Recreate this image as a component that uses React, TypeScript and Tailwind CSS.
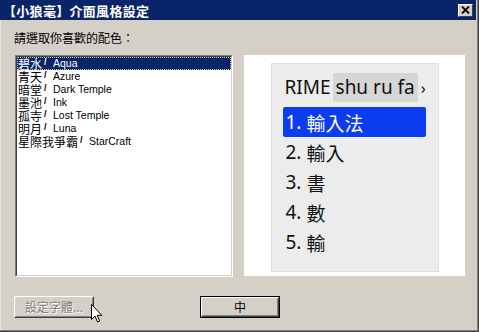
import React from "react";

const items: [string, string][] = [
  ["碧水", "Aqua"],
  ["青天", "Azure"],
  ["暗堂", "Dark Temple"],
  ["墨池", "Ink"],
  ["孤寺", "Lost Temple"],
  ["明月", "Luna"],
  ["星際我爭霸", "StarCraft"],
];

const cands = ["輸入法", "輸入", "書", "數", "輸"];

export default function App() {
  return (
    <div className="relative w-[479px] h-[332px] overflow-hidden bg-[#d4d0c8] font-['Noto_Sans_CJK_TC',sans-serif] shadow-[inset_-1px_-1px_0_#404040,inset_-2px_-2px_0_#808080,inset_1px_0_0_#e8e6e0]">
      {/* title bar */}
      <div className="mr-[3px] h-[20px] bg-[#0a246a] flex items-center justify-between pl-[3px] pr-[3px]">
        <span className="text-white font-bold text-[13px] leading-none tracking-[0.3px]">【小狼毫】介面風格設定</span>
        <div className="w-[15px] h-[13px] bg-[#d4d0c8] border-t border-l border-white border-r border-b border-r-[#404040] border-b-[#404040] flex items-center justify-center">
          <svg width="9" height="8" viewBox="0 0 9 8">
            <path d="M1 0.5 L8 7.5 M8 0.5 L1 7.5" stroke="#000" strokeWidth="1.8" />
          </svg>
        </div>
      </div>

      <div className="px-[14px]">
        <div className="mt-[10px] h-[16px] text-[12px] leading-[16px] text-black">請選取你喜歡的配色：</div>

        <div className="mt-[9px] flex gap-[11px]">
          {/* list */}
          <div className="ml-[1px] w-[219px] h-[222px] border border-t-[#808080] border-l-[#808080] border-r-white border-b-white">
            <div className="w-full h-full bg-white border border-t-[#404040] border-l-[#404040] border-r-[#d4d0c8] border-b-[#d4d0c8]">
              {items.map(([zh, en], i) => (
                <div
                  key={zh}
                  className={
                    "h-[13px] flex items-center pl-[1px] whitespace-nowrap " +
                    (i === 0
                      ? "bg-[#0a246a] text-white outline-1 outline-dotted outline-[#c8c4b8] -outline-offset-1"
                      : "text-black")
                  }
                >
                  <span className="text-[12px] leading-[13px]">{zh}</span>
                  <span className="w-[11px] h-[13px] pl-[2px] font-['Liberation_Sans',sans-serif] font-bold text-[9px] leading-[10px]">/</span>
                  <span className="font-['Liberation_Sans',sans-serif] text-[10.5px] leading-[13px]">{en}</span>
                </div>
              ))}
            </div>
          </div>

          {/* preview */}
          <div className="w-[221px] h-[221px] bg-white pt-[8px] pl-[27px]">
            <div className="w-[168px] h-[209px] bg-[#ececec] border border-[#dedede] pl-[11px] pt-[9px] font-['Noto_Sans','Noto_Sans_CJK_TC',sans-serif] text-[#111]">
              <div className="h-[29px] flex items-center text-[19px] leading-none">
                <span className="pl-[1px]">RIME</span>
                <span className="ml-[2px] h-[29px] bg-[#d6d6d6] px-[3px] flex items-center">shu ru fa</span>
                <span className="ml-[3px] text-[16px]">›</span>
              </div>
              <div className="mt-[5px]">
                {cands.map((c, i) => (
                  <div
                    key={i}
                    className={
                      "h-[30px] w-[143px] flex items-center pl-[2px] text-[19px] leading-none rounded-[2px] " +
                      (i === 0 ? "bg-[#0b3cef] text-white" : "")
                    }
                  >
                    <span>{i + 1}.</span>
                    <span className="ml-[5px] font-['Noto_Sans_CJK_TC',sans-serif]">{c}</span>
                  </div>
                ))}
              </div>
            </div>
          </div>
        </div>

        {/* buttons */}
        <div className="mt-[19px] flex">
          <div className="w-[80px] h-[22px] border border-t-white border-l-white border-r-[#404040] border-b-[#404040]">
            <div className="w-full h-full border border-t-[#d4d0c8] border-l-[#d4d0c8] border-r-[#808080] border-b-[#808080] flex items-center justify-center text-[12px] leading-none text-[#808080] [text-shadow:1px_1px_0_#ffffff]">
              設定字體...
            </div>
          </div>
          <div className="ml-[106px] w-[80px] h-[22px] border border-black">
            <div className="w-full h-full border border-t-white border-l-white border-r-[#404040] border-b-[#404040]">
              <div className="w-full h-full border border-transparent border-r-[#808080] border-b-[#808080] flex items-center justify-center text-[12px] leading-none text-black">
                中
              </div>
            </div>
          </div>
        </div>
      </div>

      {/* mouse cursor */}
      <svg className="absolute left-[91px] top-[304px]" width="12" height="20" viewBox="0 0 12 20">
        <path d="M0.5 0.5 L0.5 15.5 L4 12 L6.5 18 L8.7 17 L6.2 11.3 L10.8 11.3 Z" fill="#fff" stroke="#000" strokeWidth="1" strokeLinejoin="miter" />
      </svg>
    </div>
  );
}
